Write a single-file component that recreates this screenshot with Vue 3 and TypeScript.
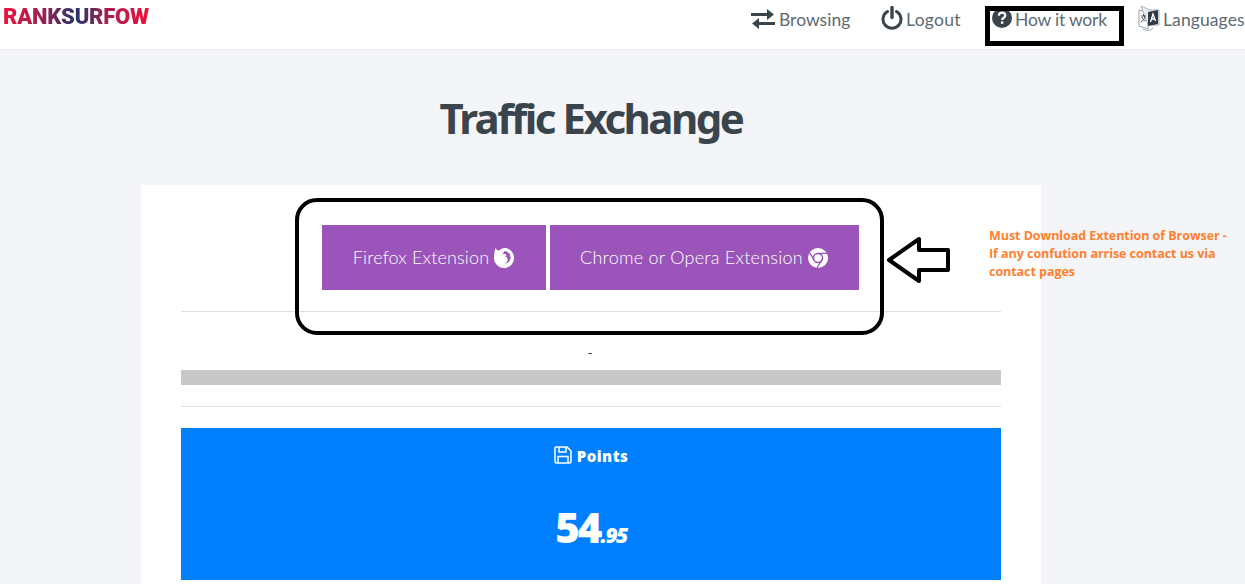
<script setup lang="ts">
const links = [
  { label: 'Browsing', icon: 'swap' },
  { label: 'Logout', icon: 'power' },
  { label: 'How it work', icon: 'help' },
  { label: 'Languages', icon: 'lang' }
]
</script>

<template>
  <div class="page">
    <header class="nav">
      <div class="logo">RANKSURFOW</div>
      <ul class="menu">
        <li v-for="link in links" :key="link.label" :class="'item-' + link.icon">
          <svg v-if="link.icon === 'swap'" class="ico swap" viewBox="0 0 24 20">
            <path d="M0 5h16V1l7 5.500-7 5.500V8H0z" transform="translate(0 -1)" fill="#3a444c" />
            <path d="M24 13H8V9L1 14.500 8 20v-4h16z" fill="#3a444c" />
          </svg>
          <svg v-else-if="link.icon === 'power'" class="ico power" viewBox="0 0 22 24">
            <path d="M6.500 5.500a9 9 0 1 0 9 0" fill="none" stroke="#3a444c" stroke-width="3" stroke-linecap="round" />
            <path d="M11 1.500v10" fill="none" stroke="#3a444c" stroke-width="3.400" stroke-linecap="round" />
          </svg>
          <svg v-else-if="link.icon === 'help'" class="ico help" viewBox="0 0 20 20">
            <circle cx="10" cy="10" r="10" fill="#3a444c" />
            <path d="M6.800 7.600c.2-1.900 1.500-2.900 3.300-2.900 1.900 0 3.200 1.100 3.200 2.700 0 2.300-3.200 2.400-3.200 4.600" fill="none" stroke="#fff" stroke-width="2.200" />
            <rect x="8.900" y="13.400" width="2.400" height="2.400" fill="#fff" />
          </svg>
          <svg v-else class="ico lang" viewBox="0 0 22 26">
            <path d="M1 5l9 2v17l-9-3z" fill="#fff" stroke="#9aa3a8" />
            <path d="M3 1l9 4h9v15l-11 0z" fill="#e8edf0" stroke="#9aa3a8" stroke-width=".8" />
            <path d="M10 7l10-2v14l-10 2z" fill="#2f3a44" />
            <path d="M12.500 17l2.500-8 2.500 7M13.500 14h3" fill="none" stroke="#fff" stroke-width="1.300" />
            <path d="M3 11h5M5.500 9v2M7 11c-.5 3-2 5-4 6M4 12c.5 2 2 3.500 3.500 4" fill="none" stroke="#4a5560" />
            <path d="M5 24c3 2 7 2 10-1" fill="none" stroke="#9aa3a8" />
          </svg>
          <span>{{ link.label }}</span>
        </li>
      </ul>
    </header>

    <div class="content">
      <h1 class="title">Traffic Exchange</h1>

      <main class="card">
        <div class="buttons">
          <a class="btn btn-ff">
            <span>Firefox Extension</span>
            <svg class="btn-ico" viewBox="0 0 20 20">
              <path d="M1.500 0c.8 1.500 1.800 2.400 3.200 2.700C6.300 1.500 8.200 0 10.500 0 16 0 20 4.500 20 10s-4.500 10-10 10S0 15.500 0 10c0-3.500.5-7 1.500-10z" fill="#fff" />
              <path d="M10.500 3c3.500.3 6 3 6 6.500 0 3.600-2.800 6.300-6.500 6.300 2.200-.6 3.700-2.200 3.700-4.300 0-1.600-1-2.800-2.700-3.300l1.800-1.300C11.800 6 10.400 5.800 8.500 6.300z" fill="#9b54b9" />
            </svg>
          </a>
          <a class="btn btn-ch">
            <span>Chrome or Opera Extension</span>
            <svg class="btn-ico" viewBox="0 0 20 20">
              <circle cx="10" cy="10" r="10" fill="#fff" />
              <circle cx="10" cy="10" r="4.600" fill="none" stroke="#9b54b9" stroke-width="1.500" />
              <path d="M10 5.400h9M14 11.500L9 19.800M6 12L1.600 4.500" fill="none" stroke="#9b54b9" stroke-width="1.300" />
            </svg>
          </a>
        </div>
        <hr class="rule" />
        <p class="dash">-</p>
        <div class="progress"></div>
        <hr class="rule rule-second" />
        <section class="points">
          <div class="points-head">
            <svg class="save" viewBox="0 0 18 18">
              <path d="M2 1h11l4 4v10.500a1.500 1.500 0 0 1-1.500 1.500h-13A1.500 1.500 0 0 1 1 15.500V2a1 1 0 0 1 1-1z" fill="none" stroke="#fff" stroke-width="1.500" />
              <path d="M5 1.500v4.500h7V1.500M4 17v-6.500h10V17" fill="none" stroke="#fff" stroke-width="1.500" />
            </svg>
            <strong>Points</strong>
          </div>
          <div class="points-value">54<em>.95</em></div>
        </section>
      </main>
    </div>

    <!-- annotations drawn on top of the screenshot -->
    <div class="mark-box"></div>
    <div class="mark-round"></div>
    <svg class="mark-arrow" viewBox="0 0 66 48">
      <path d="M3 24L33 3v11h29v20H33v11z" fill="#fff" stroke="#000" stroke-width="4" stroke-linejoin="round" />
    </svg>
    <p class="note">Must Download Extention of Browser - If any confution arrise contact us via contact pages</p>
  </div>
</template>

<style scoped>
.page {
  position: relative;
  height: 584px;
  overflow: hidden;
  background: #f4f5f8;
  color: #3a444c;
  font-family: "Source Sans Pro", "Noto Sans", sans-serif;
}
.nav {
  height: 49px;
  background: #fff;
  border-bottom: 1px solid #eceef0;
  display: flex;
  justify-content: space-between;
}
.logo {
  margin: 5px 0 0 3px;
  height: 24px;
  font: 900 22px/24px Roboto, sans-serif;
  letter-spacing: -0.2px;
  background: linear-gradient(90deg, #f0103c 0%, #a0204f 25%, #23346a 50%, #a0204f 70%, #f0103c 100%);
  -webkit-background-clip: text;
  background-clip: text;
  color: transparent;
}
.menu {
  list-style: none;
  margin: 0;
  padding: 0;
  display: flex;
}
.menu li {
  display: flex;
  align-items: flex-start;
  font: 400 17.500px/24px Lato, sans-serif;
  color: #5d6a73;
  white-space: nowrap;
  padding-top: 8px;
}
.ico {
  flex: none;
}
.item-swap {
  width: 130px;
}
.swap {
  width: 24px;
  height: 20px;
  margin-right: 4px;
  margin-top: 1px;
}
.item-power {
  width: 111px;
}
.item-power span {
  letter-spacing: 0.3px;
}
.power {
  width: 22px;
  height: 24px;
  margin-right: 3px;
  margin-top: -2px;
}
.item-help {
  width: 146px;
}
.item-help span {
  letter-spacing: -0.2px;
}
.help {
  width: 20px;
  height: 20px;
  margin-right: 3px;
  margin-top: 0;
}
.item-lang {
  width: 107px;
}
.item-lang span {
  letter-spacing: 0.1px;
}
.lang {
  width: 22px;
  height: 26px;
  margin-right: 3px;
  margin-top: -3px;
}
.content {
  width: 1182px;
}
.title {
  margin: 42px 0 41px;
  text-align: center;
  font: 700 42px/52px "Noto Sans", sans-serif;
  letter-spacing: -2.500px;
  color: #3a444c;
}
.card {
  width: 820px;
  margin: 0 auto;
  padding: 40px;
  background: #fff;
}
.buttons {
  display: flex;
  justify-content: center;
  gap: 4px;
  margin-left: -2px;
}
.btn {
  height: 65px;
  display: flex;
  align-items: center;
  justify-content: center;
  gap: 5px;
  background: #9b54b9;
  color: #fff;
  font: 300 18px/24px Lato, sans-serif;
  letter-spacing: 0.15px;
}
.btn span {
  margin-bottom: 2px;
}
.btn-ff {
  width: 224px;
}
.btn-ch {
  width: 309px;
  letter-spacing: 0.25px;
}
.btn-ico {
  width: 20px;
  height: 20px;
}
.rule {
  margin: 21px 0 0;
  border: 0;
  border-top: 1px solid #dedede;
}
.dash {
  margin: 30px 2px 0 0;
  height: 28px;
  text-align: center;
  font: 400 13px/20px "Noto Sans", sans-serif;
  color: #333;
}
.progress {
  height: 15px;
  background: #c8c8c8;
}
.rule-second {
  margin-top: 21px;
}
.points {
  margin-top: 21px;
  height: 152px;
  background: #0080ff;
  color: #fff;
  text-align: center;
}
.points-head {
  padding-top: 18px;
  display: flex;
  justify-content: center;
  gap: 5px;
  font: 700 15px/20px "Noto Sans", sans-serif;
  letter-spacing: 0.5px;
}
.save {
  width: 18px;
  height: 18px;
}
.points-value {
  margin-top: 36px;
  font: 900 42px/50px "Noto Sans", sans-serif;
  letter-spacing: -2px;
}
.points-value em {
  font-size: 21px;
  letter-spacing: -1.500px;
}
.mark-box {
  position: absolute;
  left: 985px;
  top: 6px;
  width: 129px;
  height: 30px;
  border: 5px solid #000;
}
.mark-round {
  position: absolute;
  left: 295px;
  top: 198px;
  width: 581px;
  height: 129px;
  border: 4px solid #000;
  border-radius: 22px;
}
.mark-arrow {
  position: absolute;
  left: 886px;
  top: 236px;
  width: 66px;
  height: 48px;
}
.note {
  position: absolute;
  left: 989px;
  top: 227px;
  width: 240px;
  margin: 0;
  font: 700 12.500px/18px "Open Sans", sans-serif;
  letter-spacing: -0.050px;
  color: #ff7f2f;
}
</style>
